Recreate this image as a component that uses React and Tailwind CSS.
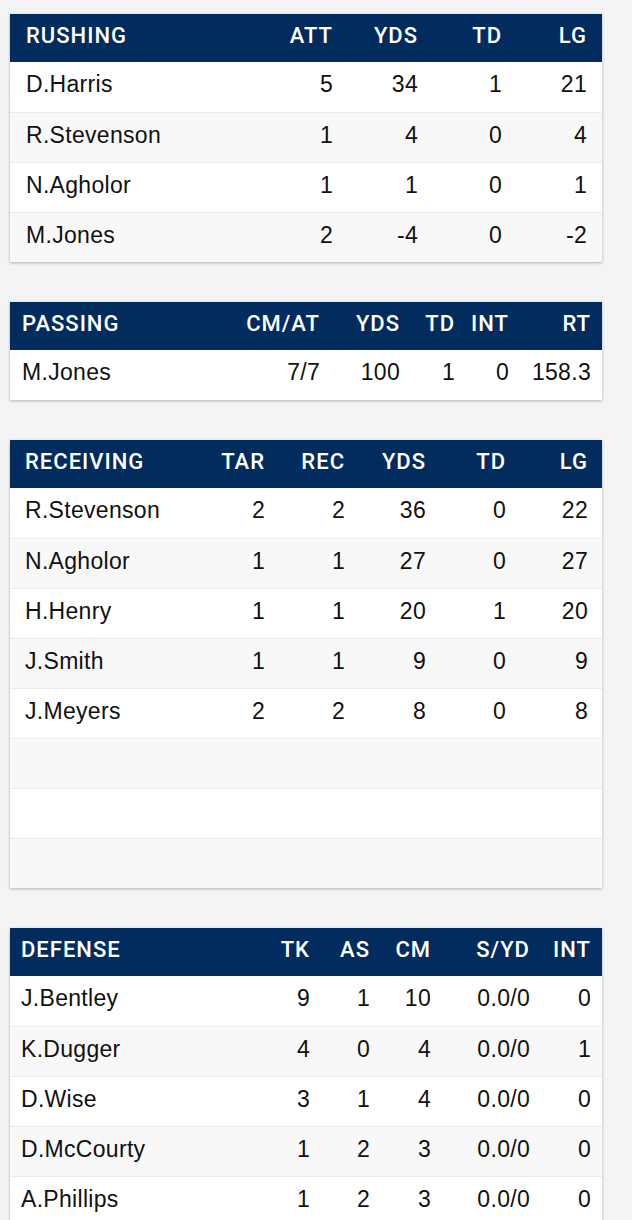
import React from "react";

const tables = [
  {
    title: "RUSHING",
    cols: ["ATT", "YDS", "TD", "LG"],
    grid: "grid-cols-[1fr_85px_85px_84px_85px]",
    pad: "pl-4 pr-[15px]",
    rows: [
      ["D.Harris", "5", "34", "1", "21"],
      ["R.Stevenson", "1", "4", "0", "4"],
      ["N.Agholor", "1", "1", "0", "1"],
      ["M.Jones", "2", "-4", "0", "-2"],
    ],
  },
  {
    title: "PASSING",
    cols: ["CM/AT", "YDS", "TD", "INT", "RT"],
    grid: "grid-cols-[1fr_120px_80px_55px_54px_82px]",
    pad: "pl-3 pr-[11px]",
    rows: [["M.Jones", "7/7", "100", "1", "0", "158.3"]],
  },
  {
    title: "RECEIVING",
    cols: ["TAR", "REC", "YDS", "TD", "LG"],
    grid: "grid-cols-[1fr_80px_80px_81px_80px_82px]",
    pad: "pl-[15px] pr-[14px]",
    rows: [
      ["R.Stevenson", "2", "2", "36", "0", "22"],
      ["N.Agholor", "1", "1", "27", "0", "27"],
      ["H.Henry", "1", "1", "20", "1", "20"],
      ["J.Smith", "1", "1", "9", "0", "9"],
      ["J.Meyers", "2", "2", "8", "0", "8"],
      ["", "", "", "", "", ""],
      ["", "", "", "", "", ""],
      ["", "", "", "", "", ""],
    ],
  },
  {
    title: "DEFENSE",
    cols: ["TK", "AS", "CM", "S/YD", "INT"],
    grid: "grid-cols-[1fr_60px_60px_61px_99px_61px]",
    pad: "pl-[11px] pr-[11px]",
    rows: [
      ["J.Bentley", "9", "1", "10", "0.0/0", "0"],
      ["K.Dugger", "4", "0", "4", "0.0/0", "1"],
      ["D.Wise", "3", "1", "4", "0.0/0", "0"],
      ["D.McCourty", "1", "2", "3", "0.0/0", "0"],
      ["A.Phillips", "1", "2", "3", "0.0/0", "0"],
    ],
  },
];

function StatTable({ t }) {
  return (
    <div className="bg-white shadow-[0_1px_3px_rgba(0,0,0,0.28)]">
      <div
        className={`grid ${t.grid} ${t.pad} h-[48px] items-center pb-[5px] bg-[#022b5e] text-white text-[22px] font-medium tracking-[1px]`}
        style={{ fontFamily: "Roboto, 'Open Sans', sans-serif" }}
      >
        <div>{t.title}</div>
        {t.cols.map((c, i) => (
          <div key={i} className="text-right">
            {c}
          </div>
        ))}
      </div>
      {t.rows.map((r, ri) => (
        <div
          key={ri}
          className={`grid ${t.grid} ${t.pad} h-[50px] items-center pb-[5px] text-[23px] tracking-[0.3px] text-[#111] ${
            ri % 2 === 1 ? "bg-[#f8f8f8]" : "bg-white"
          } ${ri > 0 ? "border-t border-[#ebebeb]" : ""}`}
          style={{ fontFamily: "'Liberation Sans', Arial, sans-serif" }}
        >
          {r.map((v, ci) => (
            <div key={ci} className={ci === 0 ? "text-left" : "text-right"}>
              {v}
            </div>
          ))}
        </div>
      ))}
    </div>
  );
}

export default function App() {
  return (
    <div className="min-h-[1220px] bg-[#f4f4f4] pt-[14px] pb-10 pl-[10px] pr-[30px] flex flex-col gap-10">
      {tables.map((t, i) => (
        <StatTable key={i} t={t} />
      ))}
    </div>
  );
}
